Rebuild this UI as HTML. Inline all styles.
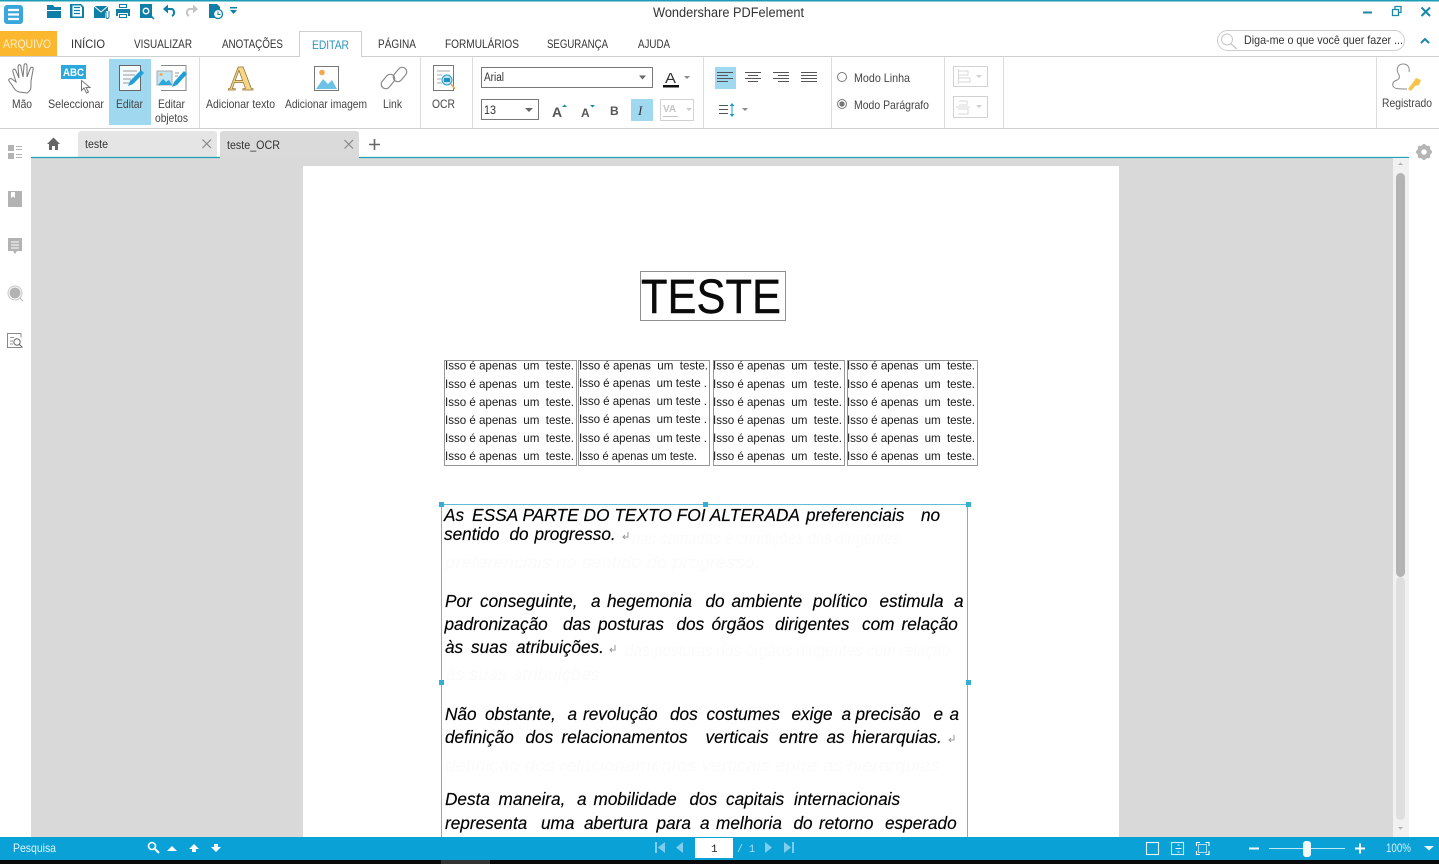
<!DOCTYPE html>
<html lang="pt"><head><meta charset="utf-8"><title>Wondershare PDFelement</title>
<style>
html,body{margin:0;padding:0;background:#fff;width:1439px;height:864px;overflow:hidden}
svg{display:block}
text{font-family:"Liberation Sans",sans-serif;white-space:pre}
.u{font-size:12px;fill:#444}
.m{font-size:11.5px;fill:#333}
.t{font-size:11.6px;fill:#1a1a1a}
.p{font-size:17.2px;font-style:italic;fill:#000;stroke:#000;stroke-width:.15px}
.g{font-size:17px;font-style:italic;fill:#fbfbfb}
</style></head><body>
<svg width="1439" height="864" viewBox="0 0 1439 864" xmlns="http://www.w3.org/2000/svg">
<rect width="1439" height="864" fill="#fff"/>
<rect width="1439" height="1.5" fill="#1b9db5"/>

<!-- app button -->
<rect x="4" y="5" width="19" height="19" rx="3" fill="#3aa7dc"/>
<path d="M8 10h11M8 14.500h11M8 19h11" stroke="#fff" stroke-width="2.200"/>

<!-- quick access -->
<g fill="#0f7fa8">
<path d="M47 5h6l1.500 2h6.500v3h-14zM47 11h14v7h-14z"/>
<path d="M70 4h11l3 3v11h-14z"/><path d="M72.500 5.500h8l1.500 2v9h-9.500z" fill="#fff"/>
<path d="M94 6h14v5c-2 0-3 1-3 3v4h-11z"/><path d="M94 6l7 6 7-6" stroke="#fff" fill="none"/>
<path d="M119 4h8v4h-8zM116 9h14v7h-2v-3h-10v3h-2zM119 14h8v4h-8z"/>
</g>
<path d="M74 7.500h6M74 10.500h6M74 13.500h6" stroke="#0f7fa8" stroke-width="1.200"/>
<path d="M119.500 4.500h7v3h-7zM119.500 14.500h7v3h-7z" fill="#fff" stroke="#0f7fa8"/>
<path d="M106 12v5a1.500 1.500 0 0 0 3 0v-6" fill="none" stroke="#0f7fa8" stroke-width="1"/>
<path d="M140 4h12v14h-12z" fill="#0f7fa8"/>
<circle cx="146" cy="11" r="4" fill="#fff" stroke="#0f7fa8" stroke-width="1"/>
<circle cx="146" cy="11" r="2" fill="#0f7fa8"/>
<path d="M149 14l5 5" stroke="#0f7fa8" stroke-width="1.500"/>
<path d="M165 9h7a4 4 0 0 1 0 7" fill="none" stroke="#0f7fa8" stroke-width="2"/><path d="M168 4.500l-5 4.500 5 4.500z" fill="#0f7fa8"/>
<path d="M196 9h-7a4 4 0 0 0 0 7" fill="none" stroke="#c4c4c4" stroke-width="2"/><path d="M193 4.500l5 4.500-5 4.500z" fill="#c4c4c4"/>
<path d="M209 4h8l3 3v11h-11z" fill="#0f7fa8"/><circle cx="218" cy="14" r="4.500" fill="#fff" stroke="#0f7fa8" stroke-width="1.300"/><path d="M218 11.500v3h2.500" fill="none" stroke="#0f7fa8"/>
<path d="M230 7h7v1.500h-7zM230 10h7l-3.500 4z" fill="#0f7fa8"/>

<text x="653" y="17" font-size="13.500" fill="#333" textLength="151" lengthAdjust="spacingAndGlyphs">Wondershare PDFelement</text>
<path d="M1363 12.500h9" stroke="#1a88a8" stroke-width="2"/>
<path d="M1392.500 9.500h6v6h-6zM1395 9v-2.500h6v6h-2" fill="none" stroke="#1a88a8" stroke-width="1.300"/>
<path d="M1421.500 7.500l8.500 8.500M1430 7.500l-8.500 8.500" stroke="#1a88a8" stroke-width="2"/>

<!-- ribbon tabs -->
<rect x="0" y="56" width="1439" height="1" fill="#cfcfcf"/>
<rect x="0" y="31" width="57" height="25" fill="#fbb82f"/>
<text x="3" y="48" class="m" style="fill:#fdeec6" textLength="48" lengthAdjust="spacingAndGlyphs">ARQUIVO</text>
<path d="M299.500 57v-25.500h62v25.500" fill="#fff" stroke="#cfcfcf"/>
<text x="71" y="48" class="m" textLength="34" lengthAdjust="spacingAndGlyphs">INÍCIO</text>
<text x="134" y="48" class="m" textLength="58" lengthAdjust="spacingAndGlyphs">VISUALIZAR</text>
<text x="222" y="48" class="m" textLength="61" lengthAdjust="spacingAndGlyphs">ANOTAÇÕES</text>
<text x="312" y="49" class="m" style="fill:#2a94b8" textLength="37" lengthAdjust="spacingAndGlyphs">EDITAR</text>
<text x="378" y="48" class="m" textLength="38" lengthAdjust="spacingAndGlyphs">PÁGINA</text>
<text x="445" y="48" class="m" textLength="74" lengthAdjust="spacingAndGlyphs">FORMULÁRIOS</text>
<text x="547" y="48" class="m" textLength="61" lengthAdjust="spacingAndGlyphs">SEGURANÇA</text>
<text x="638" y="48" class="m" textLength="32" lengthAdjust="spacingAndGlyphs">AJUDA</text>

<rect x="1217.500" y="30.500" width="187" height="20" rx="10" fill="#fff" stroke="#cdcdcd"/>
<circle cx="1227" cy="39.500" r="5.500" fill="none" stroke="#c8c8c8"/><path d="M1231 44l6 5" stroke="#c8c8c8" stroke-width="1.300"/>
<text x="1244" y="44" font-size="12" fill="#333" textLength="159" lengthAdjust="spacingAndGlyphs">Diga-me o que você quer fazer ...</text>
<path d="M1421 43l4-4 4 4" fill="none" stroke="#1a88a8" stroke-width="2"/>

<!-- ribbon body -->
<rect x="0" y="128" width="1439" height="1" fill="#cfcfcf"/>
<g fill="#dcdcdc"><rect x="199" y="57" width="1" height="71"/><rect x="420" y="57" width="1" height="71"/><rect x="472" y="57" width="1" height="71"/><rect x="703" y="57" width="1" height="71"/><rect x="831" y="57" width="1" height="71"/><rect x="944" y="57" width="1" height="71"/><rect x="1003" y="57" width="1" height="71"/><rect x="1376" y="57" width="1" height="71"/></g>
<rect x="109" y="59" width="42" height="66" fill="#a0d8ef"/>

<!-- hand -->
<path d="M19 92c-4-1-5-4-7-7l-3-4c-1-2 1-3 3-2l4 3-3-10c-1-3 2-4 3-1l3 7-1-11c0-3 3-3 3 0l2 10 1-11c0-3 3-3 3 0l0 11 3-8c1-3 4-2 3 1l-2 11 0 5c0 4-2 6-4 7z" fill="#fff" stroke="#777" stroke-width="1"/>
<!-- ABC -->
<rect x="61" y="65" width="25" height="14" fill="#2ba8dc"/>
<text x="63" y="76" font-size="11" font-weight="bold" fill="#fff" textLength="21" lengthAdjust="spacingAndGlyphs">ABC</text>
<path d="M81.500 80.500v10l2.500-2.500 2.500 5 2-1-2.500-4.500h4z" fill="#fff" stroke="#777"/>
<!-- Editar -->
<rect x="119.500" y="65.500" width="21" height="25" fill="#f4fbfe" stroke="#666"/>
<path d="M123 71h14M123 75h12M123 79h8M123 83h6" stroke="#999"/>
<path d="M128 86l2-5 11-11 3 3-11 11z" fill="#1f9fd6"/>
<!-- Editar objetos -->
<path d="M161 65.500h25v25h-25" fill="#fff" stroke="#888"/>
<rect x="157" y="71" width="15" height="14" fill="#bfe4f4" stroke="#aaa"/>
<path d="M158 85l5-6 3 3 3-2 3 5z" fill="#2ba8dc"/><circle cx="161" cy="74.500" r="1.500" fill="#f3a94b"/>
<path d="M175 73h4M175 76h3" stroke="#999"/>
<path d="M172 87l2-5 10-11 3 3-10 11z" fill="#1f9fd6"/>
<!-- A -->
<text x="228" y="90" style="font-family:'Liberation Serif',serif" font-size="35" font-weight="bold" fill="#f8d688" stroke="#8a6d2a" stroke-width="0.700">A</text>
<!-- image -->
<rect x="314.500" y="66.500" width="24" height="24" fill="#fff" stroke="#777"/>
<circle cx="322" cy="72.500" r="2.800" fill="#f3a94b"/>
<path d="M316 89l7-10 5 5 4-4 5 9z" fill="#6cc3e6"/>
<!-- link -->
<g fill="none" stroke="#8a8a8a" stroke-width="1.200"><rect x="380" y="77" width="16" height="9" rx="4.500" transform="rotate(-50 388 81.500)"/><rect x="392" y="70" width="16" height="9" rx="4.500" transform="rotate(-50 400 74.500)"/></g>
<!-- OCR -->
<rect x="433.500" y="65.500" width="20" height="25" fill="#fff" stroke="#777"/>
<path d="M437 71h13M437 75h5M437 79h4M437 83h5" stroke="#aaa"/>
<circle cx="447" cy="80" r="5" fill="#bfe4f4" stroke="#2a9cc8"/><rect x="444" y="78" width="6" height="4" fill="#1f8fc0"/>
<path d="M451 84l4 5" stroke="#f3a94b" stroke-width="1.500"/>

<text x="12" y="108" class="u" textLength="20" lengthAdjust="spacingAndGlyphs">Mão</text>
<text x="48" y="108" class="u" textLength="56" lengthAdjust="spacingAndGlyphs">Seleccionar</text>
<text x="116" y="108" class="u" textLength="27" lengthAdjust="spacingAndGlyphs">Editar</text>
<text x="158" y="108" class="u" textLength="27" lengthAdjust="spacingAndGlyphs">Editar</text>
<text x="155" y="122" class="u" textLength="33" lengthAdjust="spacingAndGlyphs">objetos</text>
<text x="206" y="108" class="u" textLength="69" lengthAdjust="spacingAndGlyphs">Adicionar texto</text>
<text x="285" y="108" class="u" textLength="82" lengthAdjust="spacingAndGlyphs">Adicionar imagem</text>
<text x="383" y="108" class="u" textLength="19" lengthAdjust="spacingAndGlyphs">Link</text>
<text x="432" y="108" class="u" textLength="23" lengthAdjust="spacingAndGlyphs">OCR</text>

<!-- font controls -->
<rect x="481.500" y="67.500" width="171" height="20" fill="#fff" stroke="#777"/>
<text x="484" y="81" font-size="11.500" fill="#333" textLength="20" lengthAdjust="spacingAndGlyphs">Arial</text>
<path d="M639 75.500h7l-3.500 4z" fill="#666"/>
<text x="665" y="83" font-size="15" fill="#333" textLength="11" lengthAdjust="spacingAndGlyphs">A</text>
<rect x="663" y="85" width="16" height="2.500" fill="#111"/>
<path d="M684 76h6l-3 3z" fill="#888"/>
<rect x="481.500" y="99.500" width="57" height="20" fill="#fff" stroke="#777"/>
<text x="484" y="114" font-size="12" fill="#333" textLength="12" lengthAdjust="spacingAndGlyphs">13</text>
<path d="M525 108h8l-4 4z" fill="#666"/>
<text x="552" y="117" font-size="14" font-weight="bold" fill="#555">A</text><path d="M562 107l2.500-2.500 2.500 2.500z" fill="#1a88a8"/>
<text x="581" y="117" font-size="12" font-weight="bold" fill="#555">A</text><path d="M590 105h5l-2.500 2.500z" fill="#1a88a8"/>
<text x="610" y="115" font-size="12" font-weight="bold" fill="#555">B</text>
<rect x="631" y="99" width="22" height="22" fill="#a0d8ef"/>
<text x="638" y="115" font-size="13" font-style="italic" fill="#333" style="font-family:'Liberation Serif',serif">I</text>
<rect x="660.500" y="99.500" width="33" height="21" fill="#fff" stroke="#d2d2d2"/>
<text x="663" y="112" font-size="10" font-weight="bold" fill="#c4c4c4">VA</text>
<path d="M663 116.500h15" stroke="#c4c4c4"/>
<path d="M686 108h6l-3 3z" fill="#ccc"/>

<!-- alignment -->
<rect x="715" y="67" width="21" height="22" fill="#a0d8ef"/>
<g stroke="#555" fill="none">
<path d="M717 72.500h16M717 75.500h11M717 78.500h16M717 81.500h11"/>
<path d="M745 72.500h16M748 75.500h10M745 78.500h16M748 81.500h10"/>
<path d="M773 72.500h16M778 75.500h11M773 78.500h16M778 81.500h11"/>
<path d="M801 72.500h16M801 75.500h16M801 78.500h16M801 81.500h16"/>
<path d="M719 105.500h9M719 109.500h9M719 113.500h9"/>
</g>
<path d="M732 104v12" stroke="#1a9cc8"/><path d="M729.500 106l2.500-3 2.500 3zM729.500 114l2.500 3 2.500-3z" fill="#1a9cc8"/>
<path d="M742 108h6l-3 3z" fill="#888"/>

<!-- radios -->
<circle cx="842" cy="77" r="4.500" fill="#fff" stroke="#777"/>
<circle cx="842" cy="104" r="4.500" fill="#fff" stroke="#777"/><circle cx="842" cy="104" r="2.700" fill="#777"/>
<text x="854" y="82" class="u" textLength="56" lengthAdjust="spacingAndGlyphs">Modo Linha</text>
<text x="854" y="109" class="u" textLength="75" lengthAdjust="spacingAndGlyphs">Modo Parágrafo</text>
<rect x="953.500" y="66.500" width="34" height="20" fill="#fff" stroke="#d2d2d2"/>
<rect x="953.500" y="96.500" width="34" height="21" fill="#fff" stroke="#d2d2d2"/>
<g fill="none" stroke="#d8d8d8"><path d="M958.500 69v15M959 71h9v4h-9M959 78h11v4h-11"/><path d="M956 107h14M959 101h8v4h-8M958 109h10v5h-10"/></g>
<path d="M976 75h6l-3 3zM976 105h6l-3 3z" fill="#d0d0d0"/>

<!-- Registrado -->
<path d="M1403 64c-5 0-7 5-5 9 2 3 2 6-1 7-3 1-5 3-4 6 1 3 6 3 14 3" fill="none" stroke="#8a8a8a"/>
<path d="M1403 64c5 0 7 4 6 8" fill="none" stroke="#8a8a8a"/>
<path d="M1408 89l6-8 2-3 5 2-2 5-4 1-4 5z" fill="#f5c24a"/>
<text x="1382" y="107" class="u" textLength="50" lengthAdjust="spacingAndGlyphs">Registrado</text>

<!-- tabs row -->
<path d="M47 144l6.500-6.500 6.500 6.500h-2v6h-3v-4h-3v4h-3v-6z" fill="#666"/>
<path d="M78 134a3 3 0 0 1 3-3h133a3 3 0 0 1 3 3v23h-139z" fill="#e5e5e5"/>
<path d="M220 134a3 3 0 0 1 3-3h133a3 3 0 0 1 3 3v24h-139z" fill="#dadada"/>
<text x="85" y="148" font-size="12" fill="#333" textLength="23" lengthAdjust="spacingAndGlyphs">teste</text>
<text x="227" y="149" font-size="12" fill="#333" textLength="53" lengthAdjust="spacingAndGlyphs">teste_OCR</text>
<path d="M202.500 139.500l8.500 8.500M211 139.500l-8.500 8.500M344.500 140l8.500 8.500M353 140l-8.500 8.500" stroke="#888" stroke-width="1.200"/>
<path d="M369 144.500h11M374.500 139v11" stroke="#666" stroke-width="1.600"/>

<!-- document area -->
<rect x="31" y="158" width="1378" height="679" fill="#d9d9d9"/>
<path d="M31 157.500h189M359 157.500h1050" stroke="#1d9fb8" stroke-width="1.200"/>
<rect x="1393" y="158" width="16" height="679" fill="#f1f1f1"/>
<rect x="1396" y="173" width="9" height="404" rx="4.500" fill="#b3b3b3"/>
<rect x="1396" y="577" width="9" height="243" rx="4.500" fill="#dedede"/>
<path d="M1398 165l2.500-2.500 2.500 2.500zM1398 827h5l-2.500 2.500z" fill="#b0b0b0"/>
<rect x="303" y="166" width="816" height="671" fill="#fff"/>

<!-- gear -->
<circle cx="1424" cy="152" r="5.500" fill="#b5b5b5" stroke="#b5b5b5" stroke-width="3"/>
<path d="M1424 144v16M1416 152h16M1418.300 146.300l11.400 11.400M1429.700 146.300l-11.400 11.400" stroke="#b5b5b5" stroke-width="2.500"/>
<circle cx="1424" cy="152" r="2.800" fill="#fff"/>

<!-- sidebar -->
<g fill="#b3b3b3">
<rect x="8" y="145" width="6" height="6"/><rect x="8" y="153" width="6" height="6"/>
<path d="M8 191h14v16h-14z"/>
<path d="M8 238h14v13h-5l-2 3-2-3h-5z"/>
<circle cx="15" cy="293" r="5.500"/>
</g>
<path d="M16 146.500h6M16 149.500h6M16 154.500h6M16 157.500h6" stroke="#b3b3b3"/>
<path d="M11 192v6l2-1.500 2 1.500v-6z" fill="#fff"/>
<path d="M11 242h8M11 245h8M11 248h8" stroke="#fff"/>
<circle cx="15" cy="293" r="7" fill="none" stroke="#c4c4c4"/><path d="M20 298l3 3" stroke="#b3b3b3"/>
<path d="M21 333.500h-13.500v14h14" fill="none" stroke="#888"/><path d="M21 333.500v4" stroke="#888"/>
<path d="M10 337.500h4M10 341h3M10 344h3" stroke="#999"/>
<circle cx="17" cy="342" r="3.200" fill="none" stroke="#666"/><path d="M19.500 344.500l3 3" stroke="#666"/>

<!-- page content -->
<rect x="640.500" y="271.500" width="145" height="49" fill="none" stroke="#909090"/>
<text x="641" y="313" font-size="48.500" fill="#0a0a0a" stroke="#0a0a0a" stroke-width="0.400" textLength="140" lengthAdjust="spacingAndGlyphs">TESTE</text>

<g fill="none" stroke="#969696"><rect x="444.500" y="360.500" width="132" height="105"/><rect x="578.500" y="360.500" width="131" height="105"/><rect x="713.500" y="360.500" width="131" height="105"/><rect x="847.500" y="360.500" width="130" height="105"/></g>
<text class="t" x="445" y="369.500" textLength="129">Isso é apenas  um  teste.</text>
<text class="t" x="445" y="388" textLength="129">Isso é apenas  um  teste.</text>
<text class="t" x="445" y="406" textLength="129">Isso é apenas  um  teste.</text>
<text class="t" x="445" y="424" textLength="129">Isso é apenas  um  teste.</text>
<text class="t" x="445" y="442" textLength="129">Isso é apenas  um  teste.</text>
<text class="t" x="445" y="460" textLength="129">Isso é apenas  um  teste.</text>
<text class="t" x="579" y="369.500" textLength="129">Isso é apenas  um  teste.</text>
<text class="t" x="579" y="387" textLength="128">Isso é apenas  um teste .</text>
<text class="t" x="579" y="405" textLength="128">Isso é apenas  um teste .</text>
<text class="t" x="579" y="423" textLength="128">Isso é apenas  um teste .</text>
<text class="t" x="579" y="442" textLength="128">Isso é apenas  um teste .</text>
<text class="t" x="579" y="460" textLength="118" lengthAdjust="spacingAndGlyphs">Isso é apenas um teste.</text>
<text class="t" x="713" y="369.500" textLength="129">Isso é apenas  um  teste.</text>
<text class="t" x="713" y="388" textLength="129">Isso é apenas  um  teste.</text>
<text class="t" x="713" y="406" textLength="129">Isso é apenas  um  teste.</text>
<text class="t" x="713" y="424" textLength="129">Isso é apenas  um  teste.</text>
<text class="t" x="713" y="442" textLength="129">Isso é apenas  um  teste.</text>
<text class="t" x="713" y="460" textLength="129">Isso é apenas  um  teste.</text>
<text class="t" x="847" y="369.500" textLength="128">Isso é apenas  um  teste.</text>
<text class="t" x="847" y="388" textLength="128">Isso é apenas  um  teste.</text>
<text class="t" x="847" y="406" textLength="128">Isso é apenas  um  teste.</text>
<text class="t" x="847" y="424" textLength="128">Isso é apenas  um  teste.</text>
<text class="t" x="847" y="442" textLength="128">Isso é apenas  um  teste.</text>
<text class="t" x="847" y="460" textLength="128">Isso é apenas  um  teste.</text>

<!-- ghost text -->
<text class="g" x="632" y="544" textLength="268" lengthAdjust="spacingAndGlyphs">nas camadas e condições dos dirigentes</text>
<text class="g" x="445" y="568" textLength="315" lengthAdjust="spacingAndGlyphs">preferenciais no sentido do progresso.</text>
<text class="g" x="625" y="656" textLength="325" lengthAdjust="spacingAndGlyphs">das posturas dos órgãos dirigentes com relação</text>
<text class="g" x="445" y="680" textLength="160" lengthAdjust="spacingAndGlyphs">às suas atribuições.</text>
<text class="g" x="445" y="771" textLength="500" lengthAdjust="spacingAndGlyphs">definição dos relacionamentos verticais entre as hierarquias.</text>

<!-- selection -->
<rect x="441.500" y="504.500" width="526" height="340" fill="none" stroke="#5fbcd8" stroke-width="1"/>
<g fill="#35aed4"><rect x="439" y="502" width="5" height="5"/><rect x="703" y="502" width="5" height="5"/><rect x="966" y="502" width="5" height="5"/><rect x="439" y="680" width="5" height="5"/><rect x="966" y="680" width="5" height="5"/></g>

<!-- paragraph -->
<text class="p" y="521"><tspan x="444">As</tspan></text>
<text class="p" x="472" y="521" textLength="328" lengthAdjust="spacingAndGlyphs">ESSA PARTE DO TEXTO FOI ALTERADA</text>
<text class="p" y="521"><tspan x="806">preferenciais</tspan><tspan x="921">no</tspan></text>
<text class="p" y="540"><tspan x="444">sentido</tspan><tspan x="509.500">do</tspan><tspan x="534.500">progresso.</tspan></text>
<text class="p" y="607"><tspan x="445">Por</tspan><tspan x="480">conseguinte,</tspan><tspan x="591">a</tspan><tspan x="607">hegemonia</tspan><tspan x="705.500">do</tspan><tspan x="731.500">ambiente</tspan><tspan x="813">político</tspan><tspan x="879.500">estimula</tspan><tspan x="954">a</tspan></text>
<text class="p" y="630"><tspan x="444.500">padronização</tspan><tspan x="563">das</tspan><tspan x="598">posturas</tspan><tspan x="676.500">dos</tspan><tspan x="711.500">órgãos</tspan><tspan x="775">dirigentes</tspan><tspan x="862">com</tspan><tspan x="901.500">relação</tspan></text>
<text class="p" y="653"><tspan x="445">às</tspan><tspan x="471">suas</tspan><tspan x="516">atribuições.</tspan></text>
<text class="p" y="720"><tspan x="445">Não</tspan><tspan x="485">obstante,</tspan><tspan x="567.500">a</tspan><tspan x="583">revolução</tspan><tspan x="670">dos</tspan><tspan x="706.500">costumes</tspan><tspan x="791.500">exige</tspan><tspan x="841.500">a</tspan><tspan x="855.500">precisão</tspan><tspan x="933.500">e</tspan><tspan x="949.500">a</tspan></text>
<text class="p" y="743"><tspan x="445">definição</tspan><tspan x="525.500">dos</tspan><tspan x="561.500">relacionamentos</tspan><tspan x="705.500">verticais</tspan><tspan x="779">entre</tspan><tspan x="826.500">as</tspan><tspan x="852">hierarquias.</tspan></text>
<text class="p" y="805"><tspan x="445">Desta</tspan><tspan x="498.500">maneira,</tspan><tspan x="577">a</tspan><tspan x="593.500">mobilidade</tspan><tspan x="689.500">dos</tspan><tspan x="726">capitais</tspan><tspan x="794">internacionais</tspan></text>
<text class="p" y="829"><tspan x="445">representa</tspan><tspan x="541">uma</tspan><tspan x="584">abertura</tspan><tspan x="656.500">para</tspan><tspan x="700">a</tspan><tspan x="716">melhoria</tspan><tspan x="793.500">do</tspan><tspan x="819">retorno</tspan><tspan x="885">esperado</tspan></text>
<g fill="none" stroke="#999"><path d="M628 532v5h-5M625 535l-2 2 2 2"/><path d="M615 645v5h-5M612 648l-2 2 2 2"/><path d="M954 735v5h-5M951 738l-2 2 2 2"/></g>

<!-- status bar -->
<rect x="0" y="837" width="1439" height="23" fill="#0aa2d6"/>
<rect x="0" y="860" width="1439" height="4" fill="#0a0a0a"/>
<rect x="441" y="860" width="49" height="4" fill="#333"/>
<text x="13" y="852" font-size="12" fill="#e2f5fc" textLength="43" lengthAdjust="spacingAndGlyphs">Pesquisa</text>
<circle cx="152" cy="846" r="3.500" fill="none" stroke="#fff" stroke-width="1.600"/><path d="M155 849l4 4" stroke="#fff" stroke-width="2"/>
<path d="M167 851l5-5 5 5z" fill="#fff"/>
<path d="M189 849l5-5 5 5h-3v3h-4v-3z" fill="#fff"/>
<path d="M211 847l5 5 5-5h-3v-3h-4v3z" fill="#fff"/>

<g fill="#7fcdec"><rect x="655" y="842" width="2" height="11"/><path d="M665 842v11l-7-5.500zM683 842v11l-7-5.500zM765 842v11l7-5.500zM784 842v11l7-5.500z"/><rect x="792" y="842" width="2" height="11"/></g>
<rect x="695" y="838" width="38" height="20" fill="#fff"/>
<text x="711" y="852" font-size="11" fill="#222" style="font-family:'Liberation Mono',monospace">1</text>
<text x="737" y="852" font-size="11" fill="#a8e0f5" textLength="18" lengthAdjust="spacingAndGlyphs" style="font-family:'Liberation Mono',monospace">/ 1</text>

<g fill="none" stroke="#fff" stroke-width="1.100">
<rect x="1146.500" y="842.500" width="12" height="12" stroke="#e8f7fd"/>
<rect x="1171.500" y="842.500" width="12" height="12" stroke="#cdeefa"/>
<path d="M1196.500 846v-3.500h3.500M1205.500 842.500h3.500v3.500M1209 851v3.500h-3.500M1200 854.500h-3.500v-3.500"/>
<rect x="1198.500" y="844.500" width="8" height="8" stroke-width="0.800" stroke="#cdeefa"/>
</g>
<path d="M1175.500 848.500h6M1177.500 845h2M1177.500 852h2" stroke="#e8f7fd"/>
<path d="M1249 848.500h10" stroke="#fff" stroke-width="2"/>
<path d="M1269 848.500h76" stroke="#bfe8f7"/>
<rect x="1303" y="841" width="8" height="16" rx="3" fill="#f2fbfe"/>
<path d="M1355 848.500h10M1360 843.500v10" stroke="#fff" stroke-width="2"/>
<text x="1386" y="852" font-size="12" fill="#d4f1fb" textLength="25" lengthAdjust="spacingAndGlyphs">100%</text>
<path d="M1424 846h10l-5 4.500z" fill="#e8f7fd"/>
</svg>
</body></html>
